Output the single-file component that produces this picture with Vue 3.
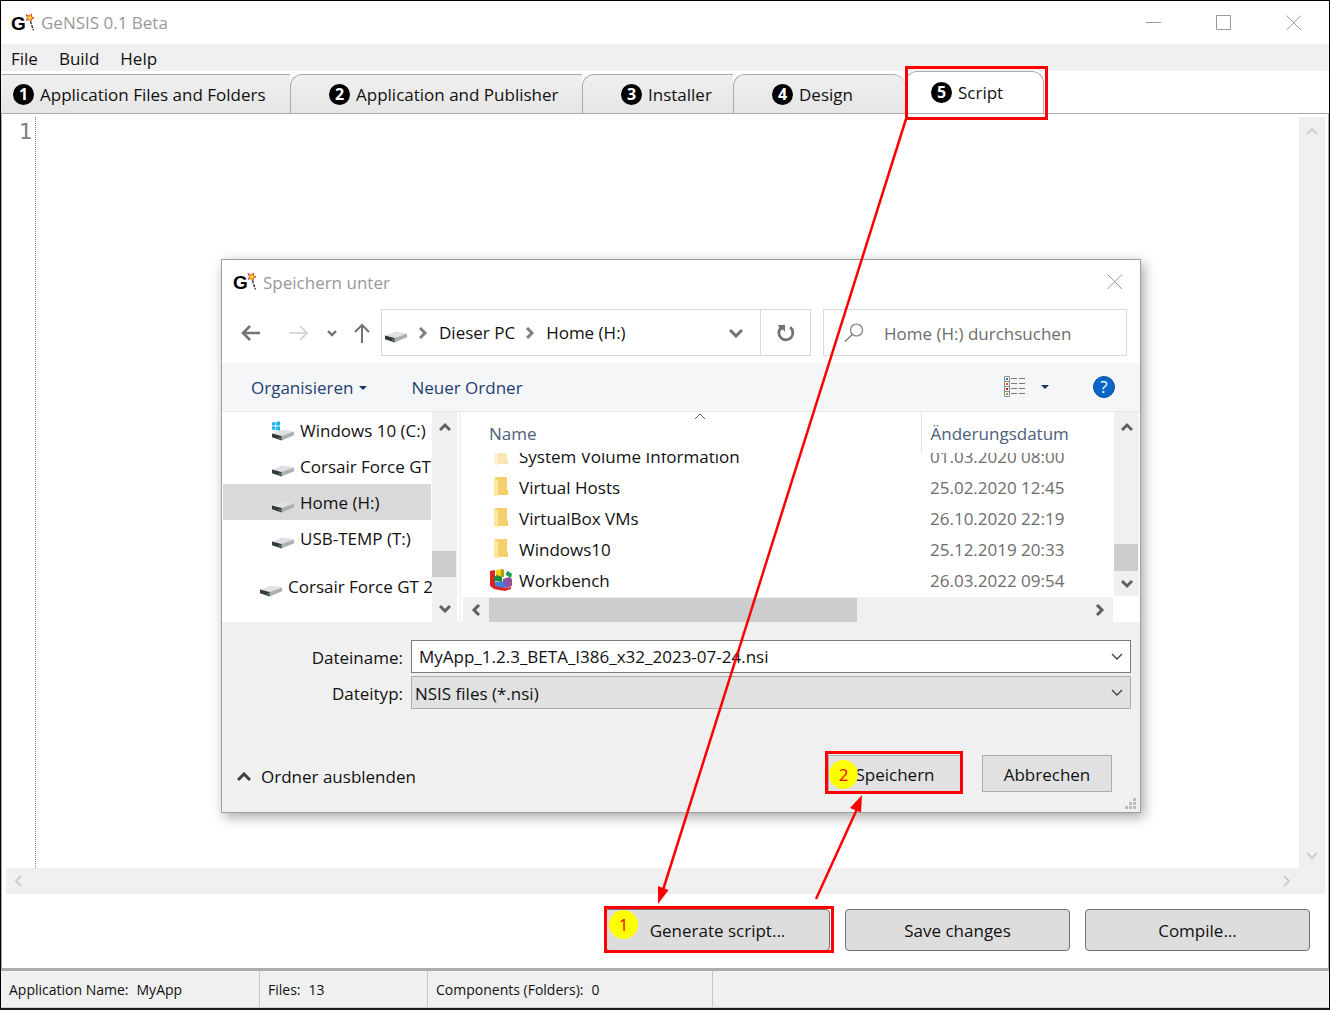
<script setup>
import { ref, h } from 'vue'

const menus = ['File', 'Build', 'Help']
const tabs = [
  { label: 'Application Files and Folders', width: 289 },
  { label: 'Application and Publisher', width: 292 },
  { label: 'Installer', width: 151 },
  { label: 'Design', width: 172 },
  { label: 'Script', width: 139 }
]
const activeTab = ref(4)
const status = [
  { text: 'Application Name:', value: 'MyApp', width: 259 },
  { text: 'Files:', value: '13', width: 168 },
  { text: 'Components (Folders):', value: '0', width: 285 }
]
const drives = [
  { name: 'Windows 10 (C:)', system: true },
  { name: 'Corsair Force GT' },
  { name: 'Home (H:)', selected: true },
  { name: 'USB-TEMP (T:)' },
  { name: 'Corsair Force GT 2', root: true }
]
const files = [
  { name: 'System Volume Information', date: '01.03.2020 08:00', faded: true },
  { name: 'Virtual Hosts', date: '25.02.2020 12:45' },
  { name: 'VirtualBox VMs', date: '26.10.2020 22:19' },
  { name: 'Windows10', date: '25.12.2019 20:33' },
  { name: 'Workbench', date: '26.03.2022 09:54', app: true }
]
const fileName = ref('MyApp_1.2.3_BETA_I386_x32_2023-07-24.nsi')
const fileType = ref('nsi')

const chevrons = {
  up: 'M1 9 L6 4 L11 9',
  down: 'M1 3 L6 8 L11 3',
  left: 'M9 1 L4 6 L9 11',
  right: 'M4 1 L9 6 L4 11'
}
const Chevron = (props) =>
  h('svg', { width: 12, height: 12, viewBox: '0 0 12 12', fill: 'none', stroke: 'currentColor', 'stroke-width': props.weight || 2, 'aria-hidden': 'true' }, [
    h('path', { d: chevrons[props.dir] })
  ])
Chevron.props = ['dir', 'weight']

const Logo = () =>
  h('svg', { width: 24, height: 22, viewBox: '0 0 24 22', 'aria-hidden': 'true' }, [
    h('text', { x: 0, y: 18, fill: '#000', 'font-family': 'Liberation Sans, sans-serif', 'font-size': 19, 'font-weight': 700 }, 'G'),
    h('path', { d: 'M15 2.5 L18 4 L20.5 2 L20.5 4.8 L23 6 L20.4 7 L20 9.6 L18 7.6 L15.4 8.4 L16.4 5.6 Z', fill: '#ffcf2e', stroke: '#c8391c', 'stroke-width': 0.8 }),
    h('path', { d: 'M19.4 9.4 L22.4 18.4', stroke: '#222', 'stroke-width': 1.3, 'stroke-dasharray': '3 1' })
  ])

const Drive = (props) =>
  h('svg', { width: 24, height: 20, viewBox: '0 0 24 20', 'aria-hidden': 'true' }, [
    props.system
      ? h('path', { d: 'M1 1.6 L4.4 1 V4.6 H1 Z M5.2 .9 L9 .2 V4.6 H5.2 Z M1 5.4 H4.4 V9 L1 8.4 Z M5.2 5.4 H9 V9.8 L5.2 9.1 Z', fill: '#12b5ea' })
      : null,
    h('path', { d: 'M1 12.5 L12 8.4 L23 10.4 L10.6 15 Z', fill: '#dfe1e4' }),
    h('path', { d: 'M10.6 15 L23 10.4 V14.2 L10.6 19.4 Z', fill: '#adafb2' }),
    h('path', { d: 'M1 12.5 L10.6 15 V19.4 L1 16.2 Z', fill: '#363839' }),
    h('path', { d: 'M8 16.2 L9.8 16.8 V18.1 L8 17.5 Z', fill: '#35c04a' })
  ])
Drive.props = ['system']
</script>

<template>
  <div class="window">
    <header class="titlebar">
      <Logo />
      <h1>GeNSIS 0.1 Beta</h1>
      <div class="window-controls">
        <button aria-label="Minimize"><svg width="16" height="16" viewBox="0 0 16 16"><path d="M0 7.5H15" /></svg></button>
        <button aria-label="Maximize"><svg width="16" height="16" viewBox="0 0 16 16"><path d="M.5 .5H14.5V14.5H.5Z" /></svg></button>
        <button aria-label="Close"><svg width="16" height="16" viewBox="0 0 16 16"><path d="M.5 .5L15 15M15 .5L.5 15" /></svg></button>
      </div>
    </header>

    <nav class="menubar">
      <button v-for="m in menus" :key="m">{{ m }}</button>
    </nav>

    <div class="tabs" role="tablist">
      <button
        v-for="(t, i) in tabs"
        :key="t.label"
        role="tab"
        class="tab"
        :class="{ active: i === activeTab }"
        :aria-selected="i === activeTab"
        :style="{ width: t.width + 'px' }"
        @click="activeTab = i"
      >
        <span class="step">{{ i + 1 }}</span>{{ t.label }}
      </button>
    </div>

    <main class="page">
      <div class="editor">
        <div class="gutter">1</div>
        <div class="code"></div>
        <div class="bar vertical"><Chevron dir="up" /><Chevron dir="down" /></div>
      </div>
      <div class="bar horizontal"><Chevron dir="left" /><Chevron dir="right" /></div>
      <div class="actions">
        <button class="marked"><span class="badge">1</span>Generate script...</button>
        <button>Save changes</button>
        <button>Compile...</button>
      </div>
    </main>

    <footer class="status">
      <div v-for="s in status" :key="s.text" :style="{ width: s.width + 'px' }">
        <span>{{ s.text }}</span><span>{{ s.value }}</span>
      </div>
    </footer>

    <section class="dialog" role="dialog" aria-labelledby="dialog-title">
      <header class="dialog-title">
        <Logo />
        <h2 id="dialog-title">Speichern unter</h2>
        <button aria-label="Schließen"><svg width="16" height="16" viewBox="0 0 16 16"><path d="M.5 .5L15 15M15 .5L.5 15" /></svg></button>
      </header>

      <div class="navrow">
        <div class="history">
          <button aria-label="Zurück"><svg width="20" height="18" viewBox="0 0 20 18"><path d="M19 9H2M9 2L2 9L9 16" stroke="#747474" stroke-width="2.6" /></svg></button>
          <button aria-label="Vorwärts"><svg width="20" height="18" viewBox="0 0 20 18"><path d="M0 9H18M11 2L18 9L11 16" stroke="#d9d9d9" stroke-width="2.2" /></svg></button>
          <button aria-label="Verlauf"><svg width="10" height="8" viewBox="0 0 10 8"><path d="M1 2L5 6L9 2" stroke="#747474" stroke-width="2.4" /></svg></button>
          <button aria-label="Nach oben"><svg width="16" height="20" viewBox="0 0 16 20"><path d="M8 20V2M1 9L8 2L15 9" stroke="#747474" stroke-width="2" /></svg></button>
        </div>
        <div class="address">
          <Drive />
          <Chevron class="crumb-sep" dir="right" weight="3" />
          <a href="#">Dieser PC</a>
          <Chevron class="crumb-sep" dir="right" weight="3" />
          <a href="#">Home (H:)</a>
          <button class="drop" aria-label="Frühere Orte"><svg width="14" height="10" viewBox="0 0 14 10"><path d="M1 2L7 8L13 2" stroke="#747474" stroke-width="3" /></svg></button>
          <button class="refresh" aria-label="Aktualisieren">
            <svg width="18" height="18" viewBox="0 0 18 18"><path d="M13 3.2A7 7 0 1 1 4 3.8" stroke="#747474" stroke-width="2.8" /><path d="M1 1H8V8L6 5.4L3.6 6.4Z" fill="#747474" /></svg>
          </button>
        </div>
        <label class="search">
          <svg width="20" height="20" viewBox="0 0 20 20"><circle cx="12.5" cy="7" r="6" stroke="#7a7a80" stroke-width="1.2" /><path d="M8.2 11.4L1 18.6" stroke="#7a7a80" stroke-width="1.4" /></svg>
          <input type="text" placeholder="Home (H:) durchsuchen" aria-label="Home (H:) durchsuchen" />
        </label>
      </div>

      <div class="toolbar">
        <button class="organize">Organisieren <svg width="8" height="4" viewBox="0 0 8 4"><path d="M0 0H8L4 4Z" fill="#1a3763" /></svg></button>
        <button class="new-folder">Neuer Ordner</button>
        <button class="view" aria-label="Ansicht">
          <svg width="22" height="22" viewBox="0 0 22 22">
            <path d="M.5 .5H5.5V20.5H.5ZM.5 5.5H5.5M.5 10.5H5.5M.5 15.5H5.5" stroke="#8d8d8d" />
            <path d="M7 2.5H13M15 2.5H21M7 7.5H13M15 7.5H21M7 12.5H13M15 12.5H21M7 17.5H13M15 17.5H21" stroke="#77797c" />
            <path d="M2 2H4V4H2Z" fill="#2f7cb5" /><path d="M2 7H4V9H2Z" fill="#b9642d" /><path d="M2 12H4V14H2Z" fill="#c0281a" /><path d="M2 17H4V19H2Z" fill="#7cab4c" />
          </svg>
          <svg width="8" height="4" viewBox="0 0 8 4"><path d="M0 0H8L4 4Z" fill="#1a3763" /></svg>
        </button>
        <button class="help" aria-label="Hilfe">?</button>
      </div>

      <div class="browser">
        <ul class="tree">
          <li v-for="d in drives" :key="d.name" :class="{ selected: d.selected, root: d.root }">
            <Drive :system="d.system" /><span>{{ d.name }}</span>
          </li>
        </ul>
        <div class="scroll tree-scroll"><Chevron dir="up" weight="3" /><i></i><Chevron dir="down" weight="3" /></div>
        <div class="listing">
          <div class="list-main">
            <table>
              <thead>
                <tr>
                  <th class="name-col" scope="col">Name<svg class="sort" width="12" height="7" viewBox="0 0 12 7"><path d="M1 6L6 1L11 6" stroke="#666" /></svg></th>
                  <th scope="col">Änderungsdatum</th>
                </tr>
              </thead>
              <tbody>
                <tr v-for="f in files" :key="f.name">
                  <td>
                    <div class="cell name">
                      <svg v-if="f.app" width="24" height="24" viewBox="0 0 24 24">
                        <path d="M1 2L6 1V15L16 19L22 18V20L16 22L5 20L1 17Z" fill="#dc241f" />
                        <path d="M7 1L14 0V8L7 9Z" fill="#efcf16" /><path d="M12 0L15 1V8L12 8Z" fill="#b69b0b" />
                        <path d="M14 10L20 8L23 10V17L17 19L13 16Z" fill="#91539c" />
                        <path d="M6 13L16 13V19L6 17Z" fill="#3f7de0" /><path d="M5 8L8 6L13 8V13L5 12Z" fill="#168b43" />
                        <path d="M17 4L19 2L23 5L22 9L17 6Z" fill="#1e9e50" />
                      </svg>
                      <svg v-else width="24" height="24" viewBox="0 0 24 24" :opacity="f.faded ? 0.5 : 1">
                        <path d="M6 1H18V13L19 14V19H8Z" fill="#f5cf6b" /><path d="M5 1L9 4V21L5 19Z" fill="#ffe7a2" />
                      </svg>
                      <span>{{ f.name }}</span>
                    </div>
                  </td>
                  <td class="date"><div class="cell">{{ f.date }}</div></td>
                </tr>
              </tbody>
            </table>
            <div class="scroll list-scroll"><Chevron dir="up" weight="3" /><i></i><Chevron dir="down" weight="3" /></div>
          </div>
          <div class="hscroll"><Chevron dir="left" weight="3" /><i></i><Chevron dir="right" weight="3" /></div>
        </div>
      </div>

      <form class="save-form" @submit.prevent>
        <div class="field">
          <label for="file-name">Dateiname:</label>
          <div class="control">
            <input id="file-name" v-model="fileName" type="text" />
            <Chevron dir="down" weight="1.4" />
          </div>
        </div>
        <div class="field">
          <label for="file-type">Dateityp:</label>
          <div class="control">
            <select id="file-type" v-model="fileType"><option value="nsi">NSIS files (*.nsi)</option></select>
            <Chevron dir="down" weight="1.4" />
          </div>
        </div>
        <div class="dialog-actions">
          <button type="button" class="collapse"><svg width="14" height="10" viewBox="0 0 14 10"><path d="M1 8L7 2L13 8" stroke="#404040" stroke-width="3" /></svg>Ordner ausblenden</button>
          <button type="submit" class="push marked"><span class="badge">2</span>Speichern</button>
          <button type="button" class="push">Abbrechen</button>
        </div>
      </form>
      <svg class="grip" width="12" height="12" viewBox="0 0 12 12"><path d="M8 0H11V3H8ZM4 4H7V7H4ZM8 4H11V7H8ZM0 8H3V11H0ZM4 8H7V11H4ZM8 8H11V11H8Z" fill="#bcbcbc" /></svg>
    </section>

    <svg class="arrows" width="1330" height="1010" viewBox="0 0 1330 1010" aria-hidden="true">
      <path d="M906 119L663 890M816 899L857 809" stroke="red" stroke-width="2.5" />
      <path d="M658 904V886L668.500 890ZM862 795L850 808L861 812.500Z" fill="red" />
    </svg>
  </div>
</template>

<style>
body {
  margin: 0;
  background: #fff;
}
</style>

<style scoped>
* {
  box-sizing: border-box;
}
.window {
  position: relative;
  display: flex;
  flex-direction: column;
  min-height: 100vh;
  border: 1px solid #000;
  border-bottom: 2px solid #1c1c1c;
  background: #fff;
  color: #111;
  font: 17px/24px "Open Sans", "Noto Sans", sans-serif;
}
button {
  display: flex;
  align-items: center;
  justify-content: center;
  border: 0;
  padding: 0;
  background: none;
  color: inherit;
  font: inherit;
}
svg {
  display: block;
  flex: none;
  fill: none;
}
h1,
h2 {
  margin: 0;
  color: #999;
  font-size: 17px;
  font-weight: 400;
}
.titlebar {
  display: flex;
  align-items: center;
  height: 43px;
  padding-left: 10px;
  gap: 6px;
}
.window-controls {
  display: flex;
  margin-left: auto;
}
.window-controls button {
  width: 70px;
  height: 43px;
}
.window-controls path,
.dialog-title button path {
  stroke: #999;
}
.menubar {
  display: flex;
  gap: 21px;
  height: 27px;
  padding: 2px 0 0 10px;
  background: #f0f0f0;
}
.tabs {
  display: flex;
  align-items: flex-end;
  height: 42px;
}
.tab {
  position: relative;
  justify-content: flex-start;
  height: 39px;
  padding: 1px 0 0 38px;
  border-top: 1px solid #acacac;
  border-left: 1px solid #acacac;
  border-top-left-radius: 12px;
  background: linear-gradient(#f0f0f0, #e5e5e5);
  white-space: nowrap;
}
.tab:first-child {
  padding-left: 12px;
  border-left: 0;
  border-top-left-radius: 0;
}
.tab:nth-child(4) {
  border-top-right-radius: 12px;
}
.tab.active {
  z-index: 1;
  height: 42px;
  padding: 0 0 0 25px;
  border-right: 1px solid #acacac;
  border-radius: 12px 12px 0 0;
  background: #fff;
}
.step {
  width: 21px;
  height: 21px;
  margin-right: 6px;
  border-radius: 50%;
  background: #000;
  color: #fff;
  font-size: 16px;
  font-weight: 700;
  line-height: 21px;
  text-align: center;
}
.tab.active::after,
.marked::after {
  position: absolute;
  inset: -4px -5px -3px -2px;
  border: 3px solid red;
  content: "";
}
.tab.active::after {
  inset: -6px -5px -7px -1px;
}
.page {
  display: flex;
  flex: 1;
  flex-direction: column;
  border: 1px solid #acacac;
  border-bottom: 0;
  padding: 3px 3px 0 4px;
}
.editor {
  display: flex;
  flex: 1;
}
.gutter {
  width: 30px;
  padding-right: 3px;
  border-right: 1px dotted #888;
  color: #808080;
  font: 22px/30px "DejaVu Sans Mono", monospace;
  text-align: right;
}
.code {
  flex: 1;
}
.bar {
  display: flex;
  align-items: center;
  justify-content: space-between;
  background: #f0f0f0;
  color: #cdcdcd;
}
.bar.vertical {
  flex-direction: column;
  width: 26px;
  padding: 8px 0 6px;
}
.bar.horizontal {
  height: 26px;
  padding: 0 33px 0 6px;
}
.actions {
  display: flex;
  justify-content: flex-end;
  gap: 15px;
  padding: 15px 15px 17px;
}
.actions button {
  position: relative;
  width: 225px;
  height: 42px;
  padding-top: 2px;
  border: 1px solid #707070;
  border-radius: 4px;
  background: #ddd;
}
.badge {
  position: absolute;
  top: 0;
  left: 3px;
  z-index: 1;
  width: 29px;
  height: 29px;
  border-radius: 50%;
  background: #ff0;
  color: red;
  font: 17px/29px "Open Sans", sans-serif;
  text-align: center;
}
.status {
  display: flex;
  height: 40px;
  border-top: 3px solid #acacac;
  border-bottom: 1px solid #d0d0d0;
  background: #f0f0f0;
  font-size: 14px;
}
.status div {
  display: flex;
  align-items: center;
  gap: 8px;
  padding: 1px 0 0 8px;
  border-right: 1px solid #c8c8c8;
}

/* Save dialog */
.dialog {
  position: absolute;
  top: 258px;
  left: 220px;
  width: 920px;
  border: 1px solid #a0a0a0;
  background: #fff;
  box-shadow: 3px 4px 12px rgb(0 0 0 / 35%);
}
.dialog-title {
  display: flex;
  align-items: center;
  gap: 6px;
  height: 44px;
  padding: 0 17px 0 11px;
}
.dialog-title h2 {
  padding-top: 2px;
}
.dialog-title button {
  margin-left: auto;
}
.navrow {
  display: flex;
  height: 59px;
  padding: 5px 13px 7px 19px;
}
.history {
  display: flex;
  align-items: center;
  justify-content: space-between;
  width: 129px;
  margin-right: 11px;
}
.history button:nth-child(2) {
  margin: 0 1px 0 11px;
}
.address {
  display: flex;
  align-items: center;
  width: 430px;
  margin-right: 12px;
  padding-left: 2px;
  border: 1px solid #d9d9d9;
}
.crumb-sep {
  margin: 0 11px 0 8px;
  color: #808080;
}
a {
  color: #111;
  text-decoration: none;
  white-space: nowrap;
}
.drop {
  width: 48px;
  height: 100%;
  margin-left: auto;
}
.refresh {
  width: 50px;
  height: 100%;
  border-left: 1px solid #d9d9d9;
}
.search {
  display: flex;
  flex: 1;
  align-items: center;
  gap: 20px;
  min-width: 0;
  padding-left: 20px;
  border: 1px solid #d9d9d9;
}
.search input {
  flex: 1;
  min-width: 0;
  padding: 2px 0 0;
  border: 0;
  background: none;
  font: inherit;
}
.search input::placeholder {
  color: #6d6d6d;
  opacity: 1;
}
.toolbar {
  display: flex;
  align-items: center;
  height: 49px;
  padding: 0 25px 1px 29px;
  border-bottom: 1px solid #e5e7e9;
  background: #f4f6f8;
  color: #1e3f70;
}
.organize,
.new-folder {
  padding-top: 3px;
}
.organize {
  gap: 6px;
  margin-right: 44px;
}
.view {
  gap: 15px;
  margin-left: auto;
}
.toolbar .help {
  width: 22px;
  height: 22px;
  margin-left: 44px;
  border: 1px solid #0a4e94;
  border-radius: 50%;
  background: #0a66c8;
  color: #fff;
  line-height: 20px;
}
.browser {
  display: flex;
  height: 210px;
}
.tree {
  width: 210px;
  margin: 0;
  padding: 0 1px;
  list-style: none;
}
.tree li {
  display: flex;
  align-items: center;
  gap: 5px;
  height: 36px;
  padding: 2px 0 0 48px;
  white-space: nowrap;
}
.tree li.selected {
  background: #d9d9d9;
}
.tree li.root {
  margin-top: 12px;
  padding-left: 36px;
}
.scroll {
  display: flex;
  flex-direction: column;
  align-items: center;
  width: 25px;
  padding: 9px 0 7px;
  background: #f0f0f0;
  color: #606060;
}
.scroll i {
  align-self: flex-start;
  width: 24px;
  height: 27px;
  margin: auto 0 7px;
  background: #cdcdcd;
}
.tree-scroll i {
  height: 26px;
  margin-bottom: 26px;
}
.listing {
  display: flex;
  flex: 1;
  flex-direction: column;
  min-width: 0;
  margin-left: 2px;
  padding: 0 1px 0 2px;
  border-left: 2px solid #f4f4f4;
}
.list-main {
  display: flex;
  align-items: flex-start;
  justify-content: space-between;
  height: 185px;
}
.list-scroll {
  height: 184px;
  padding-bottom: 6px;
}
table {
  width: 650px;
  border-collapse: collapse;
  table-layout: fixed;
}
th,
td {
  padding: 0;
  text-align: left;
}
th {
  position: relative;
  height: 41px;
  padding: 2px 0 0 9px;
  color: #4c607a;
  font-weight: 400;
}
th.name-col {
  width: 458px;
  padding-left: 26px;
  border-right: 1px solid #e5e5e5;
}
.sort {
  position: absolute;
  top: 1px;
  left: 231px;
}
.cell {
  display: flex;
  align-items: center;
  height: 31px;
  overflow: hidden;
  white-space: nowrap;
}
tr:first-child .cell {
  align-items: flex-end;
  height: 19px;
  padding-bottom: 3px;
}
.cell.name {
  gap: 6px;
  padding-left: 26px;
}
.date {
  padding-left: 9px;
  color: #6d6d6d;
}
.hscroll {
  display: flex;
  align-items: center;
  height: 25px;
  margin-right: 26px;
  padding: 0 8px 0 7px;
  background: #f0f0f0;
  color: #606060;
}
.hscroll i {
  width: 368px;
  height: 24px;
  margin: 0 auto 0 7px;
  background: #cdcdcd;
}
.save-form {
  padding: 18px 9px 20px 10px;
  background: #f0f0f0;
}
.field {
  display: flex;
  align-items: center;
  margin-bottom: 3px;
}
.field label {
  width: 171px;
  margin-right: 8px;
  padding-top: 2px;
  text-align: right;
}
.control {
  position: relative;
  flex: 1;
}
.control input,
.control select {
  display: block;
  width: 100%;
  height: 33px;
  padding: 0 7px;
  border: 1px solid #7a7a7a;
  border-radius: 0;
  outline: 0;
  background: #fff;
  color: #111;
  font: inherit;
  appearance: none;
}
.control select {
  padding: 2px 3px 0;
  border-color: #acacac;
  background: #e1e1e1;
}
.control svg {
  position: absolute;
  top: 11px;
  right: 8px;
  color: #444;
}
.dialog-actions {
  display: flex;
  align-items: center;
  gap: 20px;
  margin-top: 46px;
  padding-right: 19px;
}
.collapse {
  gap: 10px;
  margin-right: auto;
  padding: 7px 0 0 5px;
}
.push {
  position: relative;
  width: 130px;
  height: 37px;
  padding-top: 2px;
  border: 1px solid #adadad;
  background: #e1e1e1;
}
.push.marked {
  width: 134px;
}
.push.marked::after {
  inset: -5px -2px -3px -4px;
}
.push .badge {
  top: 4px;
  left: 0;
}
.grip {
  position: absolute;
  right: 3px;
  bottom: 2px;
}
.arrows {
  position: absolute;
  top: -1px;
  left: -1px;
  z-index: 3;
  pointer-events: none;
}
</style>
